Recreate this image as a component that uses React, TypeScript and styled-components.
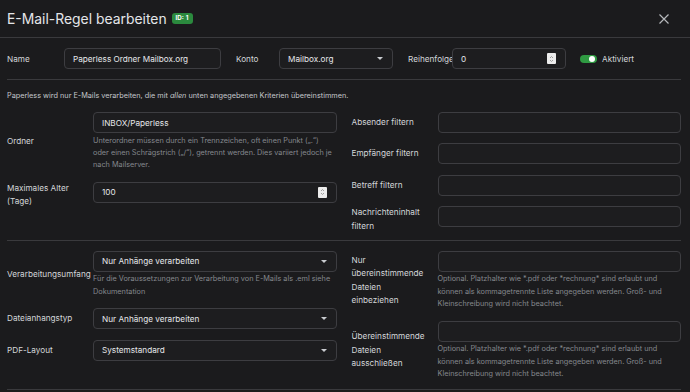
import React from 'react';
import styled, { createGlobalStyle } from 'styled-components';

const GlobalStyle = createGlobalStyle`
  html, body {
    margin: 0;
    padding: 0;
    background: #1b1b1d;
  }
  body {
    font-family: Inter, "Liberation Sans", sans-serif;
    color: #d6d9dc;
  }
`;

const Modal = styled.div`
  width: 690px;
  height: 392px;
  overflow: hidden;
  background: #1b1b1d;
`;

const Header = styled.div`
  height: 38px;
  display: flex;
  align-items: center;
  justify-content: space-between;
  padding: 0 20px 0 7px;
  border-bottom: 1px solid #3a3a3d;
  box-sizing: border-box;
`;

const Title = styled.h1`
  margin: 0;
  font-size: 13.9px;
  font-weight: 400;
  color: #e4e6e9;
  display: flex;
  align-items: center;
  gap: 5px;
`;

const Badge = styled.span`
  background: #2b8a3e;
  color: #fff;
  font-size: 6.2px;
  font-weight: 700;
  border-radius: 3px;
  padding: 2px 4px;
  line-height: 6.5px;
  word-spacing: 0.5px;
`;

const Close = styled.button`
  border: 0;
  background: transparent;
  padding: 0;
  width: 12px;
  height: 12px;
  display: flex;
`;

const Body = styled.div`
  padding: 0 9px 0 7px;
`;

const TopRow = styled.div`
  display: flex;
  align-items: center;
  height: 41px;
  border-bottom: 1px solid #3a3a3d;
`;

const InlineLabel = styled.label<{ $w: number; $ml?: number }>`
  width: ${(p) => p.$w}px;
  margin-left: ${(p) => p.$ml || 0}px;
  flex-shrink: 0;
  font-size: 8.2px;
  color: #d3d6d9;
  white-space: nowrap;
  overflow: hidden;
`;

const Input = styled.div<{ $w?: number }>`
  position: relative;
  box-sizing: border-box;
  width: ${(p) => (p.$w ? `${p.$w}px` : '100%')};
  flex-shrink: 0;
  height: 21px;
  border: 1px solid #3d3d41;
  border-radius: 4px;
  background: #1d1d1f;
  color: #e6e8eb;
  font-size: 8.2px;
  display: flex;
  align-items: center;
  padding: 0 8px;
`;

const Caret = styled.span`
  position: absolute;
  right: 9px;
  top: 8px;
  width: 0;
  height: 0;
  border-left: 3px solid transparent;
  border-right: 3px solid transparent;
  border-top: 3px solid #c9ccd0;
`;

const Spinner = styled.span`
  position: absolute;
  right: 9px;
  top: 4px;
  width: 9px;
  height: 11px;
  background: #ececec;
  border-radius: 1px;
  display: flex;
  align-items: center;
  justify-content: center;
`;

const Switch = styled.span`
  margin-left: 14px;
  width: 17px;
  height: 8px;
  border-radius: 4px;
  background: #2f9a42;
  position: relative;
  flex-shrink: 0;

  &::after {
    content: '';
    position: absolute;
    right: 2px;
    top: 1px;
    width: 6px;
    height: 6px;
    border-radius: 50%;
    background: #fff;
  }
`;

const SwitchLabel = styled.span`
  margin-left: 5px;
  font-size: 8.2px;
  color: #d3d6d9;
`;

const Notice = styled.p`
  margin: 0;
  padding: 10px 0 0;
  font-size: 7.3px;
  line-height: 12px;
  color: #c4c7cb;
`;

const Section = styled.div<{ $pb: number }>`
  display: grid;
  grid-template-columns: 1fr 1fr;
  column-gap: 15px;
  padding: 10px 0 ${(p) => p.$pb}px;
  border-bottom: 1px solid #3a3a3d;
`;

const Column = styled.div`
  display: flex;
  flex-direction: column;
  gap: 10.4px;
`;

const FieldRow = styled.div<{ $align?: string }>`
  display: grid;
  grid-template-columns: 86px 1fr;
  align-items: ${(p) => p.$align || 'center'};
`;

const Label = styled.label`
  font-size: 8.2px;
  line-height: 13.4px;
  color: #d3d6d9;
  white-space: nowrap;
`;

const Field = styled.div`
  min-width: 0;
`;

const Help = styled.div`
  margin-top: 1.5px;
  font-size: 7.3px;
  line-height: 12.3px;
  color: #85888d;
`;

const CloseIcon = () => (
  <svg width="12" height="12" viewBox="0 0 12 12">
    <path d="M1.5 1.5 L10.5 10.5 M10.5 1.5 L1.5 10.5" stroke="#b5b8bc" strokeWidth="1.2" />
  </svg>
);

const SpinIcon = () => (
  <svg width="5" height="8" viewBox="0 0 5 8">
    <path d="M1 3 L2.5 1.5 L4 3 M1 5 L2.5 6.5 L4 5" stroke="#8a8a8a" strokeWidth="0.8" fill="none" />
  </svg>
);

const Select: React.FC<{ value: string; w?: number }> = ({ value, w }) => (
  <Input $w={w}>
    {value}
    <Caret />
  </Input>
);

const NumberInput: React.FC<{ value: string; w?: number }> = ({ value, w }) => (
  <Input $w={w}>
    {value}
    <Spinner>
      <SpinIcon />
    </Spinner>
  </Input>
);

const patternHelp =
  'Optional. Platzhalter wie *.pdf oder *rechnung* sind erlaubt und können als kommagetrennte Liste angegeben werden. Groß- und Kleinschreibung wird nicht beachtet.';

const App: React.FC = () => {
  return (
    <Modal>
      <GlobalStyle />
      <Header>
        <Title>
          E-Mail-Regel bearbeiten <Badge>ID: 1</Badge>
        </Title>
        <Close aria-label="Schließen">
          <CloseIcon />
        </Close>
      </Header>
      <Body>
        <TopRow>
          <InlineLabel $w={57}>Name</InlineLabel>
          <Input $w={157}>Paperless Ordner Mailbox.org</Input>
          <InlineLabel $w={43} $ml={15}>Konto</InlineLabel>
          <Select value="Mailbox.org" w={114} />
          <InlineLabel $w={44} $ml={15}>Reihenfolge</InlineLabel>
          <NumberInput value="0" w={114} />
          <Switch />
          <SwitchLabel>Aktiviert</SwitchLabel>
        </TopRow>
        <Notice>
          Paperless wird nur E-Mails verarbeiten, die mit <em>allen</em> unten angegebenen Kriterien übereinstimmen.
        </Notice>
        <Section $pb={7}>
          <Column>
            <FieldRow>
              <Label>Ordner</Label>
              <Field>
                <Input>INBOX/Paperless</Input>
                <Help>
                  Unterordner müssen durch ein Trennzeichen, oft einen Punkt („.“) oder einen Schrägstrich („/“),
                  getrennt werden. Dies variiert jedoch je nach Mailserver.
                </Help>
              </Field>
            </FieldRow>
            <FieldRow $align="start">
              <Label>
                Maximales Alter
                <br />
                (Tage)
              </Label>
              <Field>
                <NumberInput value="100" />
              </Field>
            </FieldRow>
          </Column>
          <Column>
            <FieldRow>
              <Label>Absender filtern</Label>
              <Input />
            </FieldRow>
            <FieldRow>
              <Label>Empfänger filtern</Label>
              <Input />
            </FieldRow>
            <FieldRow>
              <Label>Betreff filtern</Label>
              <Input />
            </FieldRow>
            <FieldRow $align="start">
              <Label>
                Nachrichteninhalt
                <br />
                filtern
              </Label>
              <Input />
            </FieldRow>
          </Column>
        </Section>
        <Section $pb={9}>
          <Column>
            <FieldRow>
              <Label>Verarbeitungsumfang</Label>
              <Field>
                <Select value="Nur Anhänge verarbeiten" />
                <Help>Für die Voraussetzungen zur Verarbeitung von E-Mails als .eml siehe Dokumentation</Help>
              </Field>
            </FieldRow>
            <FieldRow>
              <Label>Dateianhangstyp</Label>
              <Select value="Nur Anhänge verarbeiten" />
            </FieldRow>
            <FieldRow>
              <Label>PDF-Layout</Label>
              <Select value="Systemstandard" />
            </FieldRow>
          </Column>
          <Column>
            <FieldRow>
              <Label>
                Nur
                <br />
                übereinstimmende
                <br />
                Dateien
                <br />
                einbeziehen
              </Label>
              <Field>
                <Input />
                <Help>{patternHelp}</Help>
              </Field>
            </FieldRow>
            <FieldRow>
              <Label>
                Übereinstimmende
                <br />
                Dateien
                <br />
                ausschließen
              </Label>
              <Field>
                <Input />
                <Help>{patternHelp}</Help>
              </Field>
            </FieldRow>
          </Column>
        </Section>
      </Body>
    </Modal>
  );
};

export default App;
